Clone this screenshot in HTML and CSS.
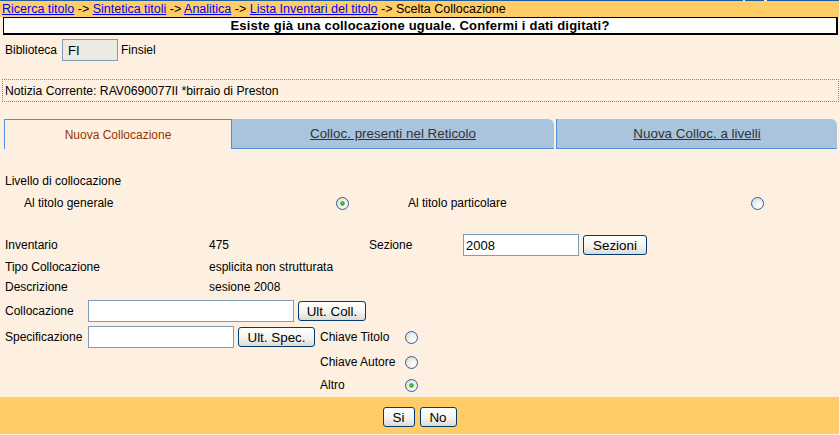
FILE: index.html
```html
<!DOCTYPE html>
<html lang="it">
<head>
<meta charset="utf-8">
<title>Scelta Collocazione</title>
<link rel="stylesheet" href="styles.css">
</head>
<body>
<div class="page">
  <div class="crumbs"><a href="#">Ricerca titolo</a> -&gt; <a href="#">Sintetica titoli</a> -&gt; <a href="#">Analitica</a> -&gt; <a href="#">Lista Inventari del titolo</a> -&gt; Scelta Collocazione</div>
  <div class="title">Esiste già una collocazione uguale. Confermi i dati digitati?</div>
  <div class="biblio">
    <span class="lbl-bib">Biblioteca</span>
    <input class="ro" type="text" value="FI" readonly>
    <span class="bib-name">Finsiel</span>
  </div>
  <div class="notizia">Notizia Corrente: RAV0690077II *birraio di Preston</div>
  <div class="tabs">
    <div class="tab active">Nuova Collocazione</div>
    <div class="tab t2"><a href="#">Colloc. presenti nel Reticolo</a></div>
    <div class="tab t3"><a href="#">Nuova Colloc. a livelli</a></div>
  </div>
  <div class="form">
    <div class="row r-livello">Livello di collocazione</div>
    <div class="row r-radio">
      <span class="c-gen">Al titolo generale</span>
      <input type="radio" name="liv" checked>
      <span class="c-part">Al titolo particolare</span>
      <input type="radio" name="liv">
    </div>
    <div class="row r-inv">
      <span class="c-lbl">Inventario</span>
      <span class="c-val">475</span>
      <span class="c-sez">Sezione</span>
      <input class="txt w-sez" type="text" value="2008">
      <button class="btn b-sez" type="button">Sezioni</button>
    </div>
    <div class="row r-tipo">
      <span class="c-lbl">Tipo Collocazione</span>
      <span>esplicita non strutturata</span>
    </div>
    <div class="row r-desc">
      <span class="c-lbl">Descrizione</span>
      <span>sesione 2008</span>
    </div>
    <div class="row r-coll">
      <span class="c-lbl2">Collocazione</span>
      <input class="txt w-coll" type="text" value="">
      <button class="btn b-coll" type="button">Ult. Coll.</button>
    </div>
    <div class="row r-spec">
      <span class="c-lbl2">Specificazione</span>
      <input class="txt w-spec" type="text" value="">
      <button class="btn b-spec" type="button">Ult. Spec.</button>
      <span class="c-key first">Chiave Titolo</span>
      <input type="radio" name="chiave">
    </div>
    <div class="row r-autore">
      <span class="c-key">Chiave Autore</span>
      <input type="radio" name="chiave">
    </div>
    <div class="row r-altro">
      <span class="c-key">Altro</span>
      <input type="radio" name="chiave" checked>
    </div>
  </div>
  <div class="bottom">
    <button class="btn b-si" type="button">Si</button>
    <button class="btn b-no" type="button">No</button>
  </div>
</div>
</body>
</html>
```

FILE: styles.css
```css
* { box-sizing: border-box; }

body {
  margin: 0;
  background: #fdf0e1;
  font-family: "Liberation Sans", Arial, sans-serif;
  font-size: 12px;
  color: #000;
}

.page { width: 839px; }

.crumbs {
  height: 17px;
  padding: 1px 0 0 2px;
  line-height: 16px;
  font-size: 12.5px;
  white-space: nowrap;
  background:
    linear-gradient(to right, #1d5c9e 743px, #fdf0e1 743px, #fdf0e1 745px, #1d5c9e 745px, #1d5c9e 764px, #fdf0e1 764px, #fdf0e1 767px, #1d5c9e 767px) top left / 100% 1px no-repeat,
    #ffcc66;
}
.crumbs a { color: #0000ff; text-decoration: underline; }

.title {
  margin-left: 3px;
  width: 835px;
  height: 18px;
  border-style: solid;
  border-color: #000;
  border-width: 1px 2px 2px 1px;
  background: #fff;
  text-align: center;
  font-weight: bold;
  font-size: 13px;
  line-height: 15px;
  letter-spacing: 0.2px;
}

.biblio {
  margin-top: 4px;
  height: 22px;
  display: flex;
  align-items: center;
  padding-left: 5px;
}
.lbl-bib { width: 57px; }
.ro {
  width: 56px;
  height: 22px;
  margin: 0;
  padding: 0 5px;
  border: 1px solid #7f9db9;
  background: #ebebe4;
  font: 13px "Liberation Sans", Arial, sans-serif;
  color: #000;
}
.bib-name { margin-left: 3px; }

.notizia {
  margin-top: 18px;
  margin-left: 2px;
  width: 837px;
  height: 23px;
  border: 1px dotted #4a8fd8;
  padding-left: 2px;
  font-size: 12.2px;
  display: flex;
  align-items: center;
}

.tabs {
  margin-top: 17px;
  margin-left: 4px;
  height: 30px;
  display: flex;
}
.tab {
  height: 30px;
  display: flex;
  align-items: center;
  justify-content: center;
  border-left: 1px solid #4f8fdb;
}
.tab a { color: #333; text-decoration: underline; font-size: 13.4px; }
.tab.active {
  width: 227px;
  border-top: 1px solid #4f8fdb;
  color: #993300;
}
.t2, .t3 {
  background: #a9c4dc;
  border-bottom: 1px solid #4f8fdb;
  border-top-right-radius: 6px;
}
.t2 { width: 323px; }
.t3 { width: 281px; margin-left: 2px; }

.form { padding-left: 5px; }
.row {
  display: flex;
  align-items: center;
  white-space: nowrap;
}
.r-livello { margin-top: 21px; height: 22px; }
.r-radio { height: 22px; }
.c-gen { margin-left: 19px; width: 312px; }
.c-part { margin-left: 59px; width: 343px; }

.r-inv { margin-top: 20px; height: 22px; }
.c-lbl { width: 204px; }
.c-val { width: 160px; }
.c-sez { width: 94px; }
.r-tipo { margin-top: 1px; height: 20px; }
.r-desc { height: 20px; }
.r-coll { margin-top: 3px; height: 22px; }
.r-spec { margin-top: 4px; height: 22px; }
.c-lbl2 { width: 83px; }
.c-key { width: 85px; margin-left: 315px; }
.c-key.first { margin-left: 5px; }
.r-autore { margin-top: 4px; height: 20px; }
.r-altro { margin-top: 3px; height: 20px; }

.txt {
  height: 22px;
  margin: 0;
  padding: 0 2px;
  border: 1px solid #7f9db9;
  background: #fff;
  font: 13px "Liberation Sans", Arial, sans-serif;
  color: #000;
}
.w-sez { width: 116px; }
.w-coll { width: 206px; }
.w-spec { width: 146px; }

.btn {
  height: 20px;
  margin: 0;
  padding: 0;
  border: 1px solid #003c74;
  border-radius: 3px;
  background: linear-gradient(#ffffff, #f4f4ef 55%, #dedad0);
  font: 13.4px "Liberation Sans", Arial, sans-serif;
  color: #000;
}
.b-sez { width: 64px; margin-left: 4px; }
.b-coll { width: 68px; margin-left: 4px; }
.b-spec { width: 77px; margin-left: 4px; }
.b-si { width: 32px; }
.b-no { width: 37px; margin-left: 5px; }

input[type="radio"] {
  -webkit-appearance: none;
  appearance: none;
  width: 13px;
  height: 13px;
  margin: 0;
  border: 1px solid #2f5f92;
  border-radius: 50%;
  background: radial-gradient(circle at 70% 70%, #ffffff 0, #ececE6 55%, #cfcfc8 100%);
}
input[type="radio"]:checked {
  background:
    radial-gradient(circle, #55d655 0, #22a322 1.8px, rgba(34,163,34,0) 2.6px),
    radial-gradient(circle at 70% 70%, #ffffff 0, #ececE6 55%, #cfcfc8 100%);
}

.bottom {
  margin-top: 2px;
  height: 37px;
  padding-top: 10px;
  background: #ffcc66;
  display: flex;
  justify-content: center;
  align-items: flex-start;
}
```
